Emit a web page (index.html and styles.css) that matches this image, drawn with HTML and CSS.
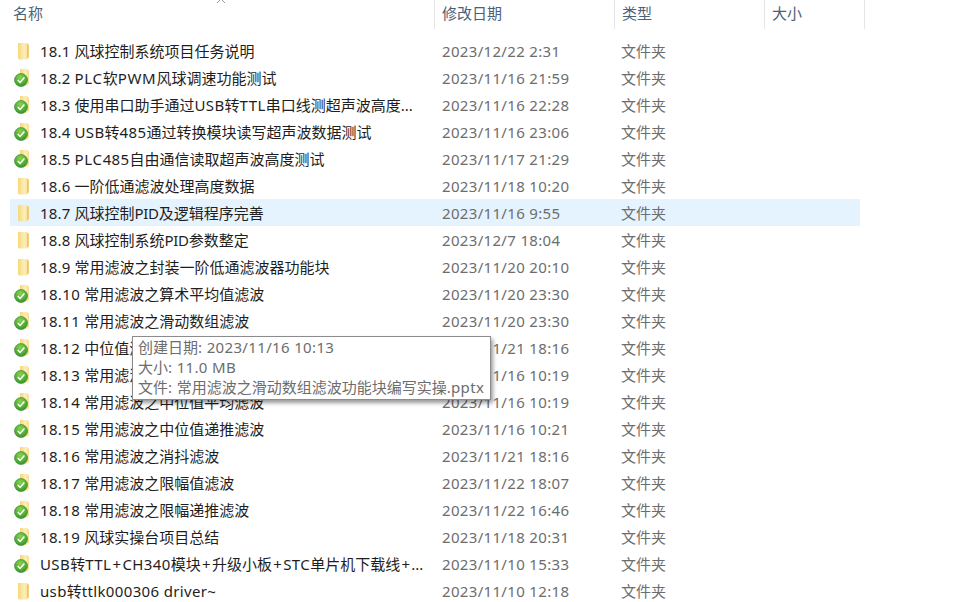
FILE: index.html
```html
<!DOCTYPE html>
<html lang="zh">
<head>
<meta charset="utf-8">
<title>文件列表</title>
<link rel="stylesheet" href="styles.css">
</head>
<body>
<svg width="0" height="0" class="defs">
  <defs>
    <linearGradient id="fg" x1="0" x2="1" y1="0" y2="0">
      <stop offset="0" stop-color="#f6d777"/>
      <stop offset=".6" stop-color="#fdeeba"/>
      <stop offset="1" stop-color="#f7dc8e"/>
    </linearGradient>
    <radialGradient id="gg" cx=".45" cy=".3" r=".8">
      <stop offset="0" stop-color="#86d44e"/>
      <stop offset="1" stop-color="#2c8f24"/>
    </radialGradient>
    <symbol id="folder" viewBox="0 0 16 18">
      <path d="M4 1h9l1.500 2v13l-2 1.500H5l-1-1.500z" fill="url(#fg)"/>
      <path d="M13 1.500l1.800 1.500V15L13 16.500z" fill="#eec766"/>
    </symbol>
    <symbol id="synced" viewBox="0 0 16 18">
      <path d="M6 0h7.500l1.500 2v13l-2 2H6z" fill="url(#fg)"/>
      <circle cx="7" cy="11" r="6.500" fill="url(#gg)" stroke="#2f7d2a" stroke-width=".6"/>
      <path d="M3.800 11l2.300 2.400 4.300-5" fill="none" stroke="#fff" stroke-width="1.500"/>
    </symbol>
  </defs>
</svg>
<div class="window">
  <svg class="sort" width="10" height="5" viewBox="0 0 10 5"><path d="M1 4l4-4 4 4" fill="none" stroke="#9a9a9a"/></svg>
  <header class="head">
    <div class="hc c-name">名称</div>
    <div class="hc c-date">修改日期</div>
    <div class="hc c-type">类型</div>
    <div class="hc c-size">大小</div>
  </header>
  <main class="list">
    <div class="row"><svg class="ic"><use href="#folder"/></svg><span class="c-n"><span class="pre">18.1 </span>风球控制系统项目任务说明</span><span class="c-d">2023/12/22 2:31</span><span class="c-t">文件夹</span></div>
    <div class="row"><svg class="ic"><use href="#synced"/></svg><span class="c-n"><span class="pre">18.2 </span><span class="up">PLC</span>软<span class="up">PWM</span>风球调速功能测试</span><span class="c-d">2023/11/16 21:59</span><span class="c-t">文件夹</span></div>
    <div class="row"><svg class="ic"><use href="#synced"/></svg><span class="c-n"><span class="pre">18.3 </span>使用串口助手通过<span class="ul">USB</span>转<span class="ul">TTL</span>串口线测超声波高度...</span><span class="c-d">2023/11/16 22:28</span><span class="c-t">文件夹</span></div>
    <div class="row"><svg class="ic"><use href="#synced"/></svg><span class="c-n"><span class="pre">18.4 </span><span class="ul">USB</span>转<span class="la">485</span>通过转换模块读写超声波数据测试</span><span class="c-d">2023/11/16 23:06</span><span class="c-t">文件夹</span></div>
    <div class="row"><svg class="ic"><use href="#synced"/></svg><span class="c-n"><span class="pre">18.5 </span><span class="up">PLC</span><span class="la">485</span>自由通信读取超声波高度测试</span><span class="c-d">2023/11/17 21:29</span><span class="c-t">文件夹</span></div>
    <div class="row"><svg class="ic"><use href="#folder"/></svg><span class="c-n"><span class="pre">18.6 </span>一阶低通滤波处理高度数据</span><span class="c-d">2023/11/18 10:20</span><span class="c-t">文件夹</span></div>
    <div class="row hover"><svg class="ic"><use href="#folder"/></svg><span class="c-n"><span class="pre">18.7 </span>风球控制<span class="nr">PID</span>及逻辑程序完善</span><span class="c-d">2023/11/16 9:55</span><span class="c-t">文件夹</span></div>
    <div class="row"><svg class="ic"><use href="#folder"/></svg><span class="c-n"><span class="pre">18.8 </span>风球控制系统<span class="nr">PID</span>参数整定</span><span class="c-d">2023/12/7 18:04</span><span class="c-t">文件夹</span></div>
    <div class="row"><svg class="ic"><use href="#folder"/></svg><span class="c-n"><span class="pre">18.9 </span>常用滤波之封装一阶低通滤波器功能块</span><span class="c-d">2023/11/20 20:10</span><span class="c-t">文件夹</span></div>
    <div class="row"><svg class="ic"><use href="#synced"/></svg><span class="c-n"><span class="la">18.10 </span>常用滤波之算术平均值滤波</span><span class="c-d">2023/11/20 23:30</span><span class="c-t">文件夹</span></div>
    <div class="row"><svg class="ic"><use href="#synced"/></svg><span class="c-n"><span class="la">18.11 </span>常用滤波之滑动数组滤波</span><span class="c-d">2023/11/20 23:30</span><span class="c-t">文件夹</span></div>
    <div class="row"><svg class="ic"><use href="#synced"/></svg><span class="c-n"><span class="la">18.12 </span>中位值滤波</span><span class="c-d">2023/11/21 18:16</span><span class="c-t">文件夹</span></div>
    <div class="row"><svg class="ic"><use href="#synced"/></svg><span class="c-n"><span class="la">18.13 </span>常用滤波之滑动中位值</span><span class="c-d">2023/11/16 10:19</span><span class="c-t">文件夹</span></div>
    <div class="row"><svg class="ic"><use href="#synced"/></svg><span class="c-n"><span class="la">18.14 </span>常用滤波之中位值平均滤波</span><span class="c-d">2023/11/16 10:19</span><span class="c-t">文件夹</span></div>
    <div class="row"><svg class="ic"><use href="#synced"/></svg><span class="c-n"><span class="la">18.15 </span>常用滤波之中位值递推滤波</span><span class="c-d">2023/11/16 10:21</span><span class="c-t">文件夹</span></div>
    <div class="row"><svg class="ic"><use href="#synced"/></svg><span class="c-n"><span class="la">18.16 </span>常用滤波之消抖滤波</span><span class="c-d">2023/11/21 18:16</span><span class="c-t">文件夹</span></div>
    <div class="row"><svg class="ic"><use href="#synced"/></svg><span class="c-n"><span class="la">18.17 </span>常用滤波之限幅值滤波</span><span class="c-d">2023/11/22 18:07</span><span class="c-t">文件夹</span></div>
    <div class="row"><svg class="ic"><use href="#synced"/></svg><span class="c-n"><span class="la">18.18 </span>常用滤波之限幅递推滤波</span><span class="c-d">2023/11/22 16:46</span><span class="c-t">文件夹</span></div>
    <div class="row"><svg class="ic"><use href="#synced"/></svg><span class="c-n"><span class="la">18.19 </span>风球实操台项目总结</span><span class="c-d">2023/11/18 20:31</span><span class="c-t">文件夹</span></div>
    <div class="row"><svg class="ic"><use href="#synced"/></svg><span class="c-n"><span class="ul">USB</span>转<span class="ul">TTL</span><span class="plus">+</span><span class="ul">CH340</span>模块<span class="plus">+</span>升级小板<span class="plus">+</span><span class="ul">STC</span>单片机下载线<span class="plus">+</span>...</span><span class="c-d">2023/11/10 15:33</span><span class="c-t">文件夹</span></div>
    <div class="row"><svg class="ic"><use href="#folder"/></svg><span class="c-n"><span class="la">usb</span>转<span class="la">ttlk000306 driver~</span></span><span class="c-d">2023/11/10 12:18</span><span class="c-t">文件夹</span></div>
  </main>
  <div class="tooltip">
    <div><span>创建日期</span><span class="la">: 2023/11/16 10:13</span></div>
    <div><span>大小</span><span class="la">: 11.0 MB</span></div>
    <div><span>文件</span><span class="la">: </span>常用滤波之滑动数组滤波功能块编写实操<span class="la">.pptx</span></div>
  </div>
</div>
</body>
</html>
```

FILE: styles.css
```css
* { box-sizing: border-box; }
html, body { margin: 0; height: 100%; background: #fff; }
.defs { position: absolute; }
.window {
  position: relative;
  width: 966px;
  height: 602px;
  overflow: hidden;
  font-family: "Noto Sans", "Noto Sans CJK SC", sans-serif;
  font-size: 15px;
  line-height: 20px;
}
.sort { position: absolute; left: 216px; top: -1px; }
.head { display: flex; height: 29px; color: #4c607a; }
.hc { padding: 3px 0 0 7px; border-right: 1px solid #e5e5e5; }
.c-name { width: 435px; padding-left: 13px; }
.c-date { width: 180px; }
.c-type { width: 150px; }
.c-size { width: 100px; }
.list { padding: 8px 106px 0 10px; }
.row { display: flex; align-items: center; height: 27px; white-space: nowrap; }
.hover { background: #e5f3ff; }
.ic { width: 16px; height: 18px; margin-left: 4px; flex: none; }
.c-n { width: 402px; margin-left: 10px; color: #1e1e1e; }
.c-d { width: 179px; color: #6d6d6d; letter-spacing: .33px; }
.c-t { color: #6d6d6d; }
.pre { letter-spacing: .15px; }
.la { letter-spacing: .35px; }
.up { letter-spacing: .7px; }
.ul { letter-spacing: .4px; }
.nr { letter-spacing: -.3px; }
.plus { padding: 0 1.300px; }
.tooltip {
  position: absolute;
  left: 132px;
  top: 336px;
  width: 359px;
  height: 64px;
  padding: 0 0 0 5px;
  background: #fff;
  border: 1px solid #8c8c8c;
  box-shadow: 2px 3px 4px rgba(0,0,0,.4);
  color: #6d6d6d;
  white-space: nowrap;
}
```
